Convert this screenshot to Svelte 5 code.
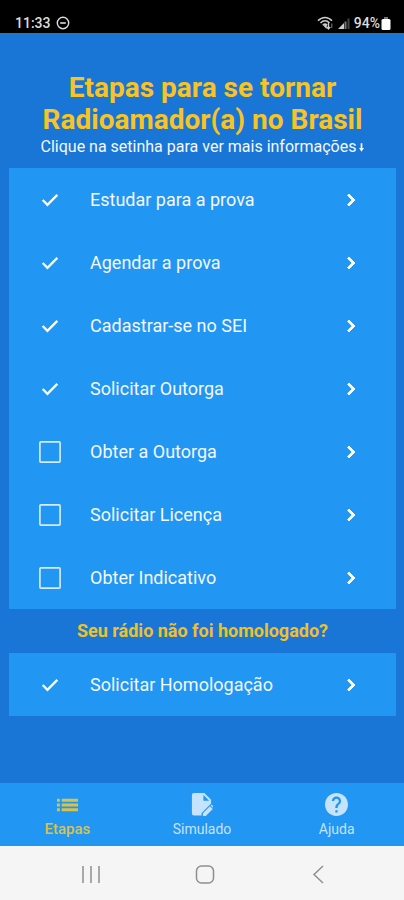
<script>
  let steps = $state([
    { id: 'estudar', label: 'Estudar para a prova', done: true },
    { id: 'agendar', label: 'Agendar a prova', done: true },
    { id: 'cadastrar', label: 'Cadastrar-se no SEI', done: true },
    { id: 'solicitar-outorga', label: 'Solicitar Outorga', done: true },
    { id: 'obter-outorga', label: 'Obter a Outorga', done: false },
    { id: 'licenca', label: 'Solicitar Licença', done: false },
    { id: 'indicativo', label: 'Obter Indicativo', done: false }
  ]);

  let extraSteps = $state([
    { id: 'homologacao', label: 'Solicitar Homologação', done: true }
  ]);

  let activeTab = $state('etapas');
</script>

{#snippet stepList(items)}
  <ul class="steps">
    {#each items as step (step.id)}
      <li class="step">
        <input type="checkbox" id={step.id} bind:checked={step.done} />
        <svg class="tick" viewBox="0 0 24 24" aria-hidden="true">
          {#if step.done}
            <path d="M4 12l5.200 5.200L20 6.400" fill="none" stroke="#fff" stroke-width="2.500" />
          {:else}
            <rect x="1" y="1" width="22" height="22" rx="1" fill="none" stroke="#d5ecff" stroke-width="1.800" />
          {/if}
        </svg>
        <label for={step.id} id="{step.id}-label">{step.label}</label>
        <button class="more" aria-labelledby="{step.id}-label">
          <svg viewBox="0 0 24 24" aria-hidden="true">
            <path d="M8.590 16.590L13.170 12 8.590 7.410 10 6l6 6-6 6z" fill="#fff" stroke="#fff" stroke-width="0.900" />
          </svg>
        </button>
      </li>
    {/each}
  </ul>
{/snippet}

<div class="screen">
  <div class="status">
    <span>11:33</span>
    <svg class="dnd" viewBox="0 0 14 14" aria-hidden="true">
      <circle cx="7" cy="7" r="5.700" fill="none" stroke="#ddd" stroke-width="1.400" />
      <path d="M4.200 7h5.600" stroke="#ddd" stroke-width="1.600" />
    </svg>
    <span class="spacer"></span>
    <svg class="wifi" viewBox="0 0 17 14" aria-hidden="true">
      <g fill="none" stroke="#ccc" stroke-width="1.500">
        <path d="M1 4.800C5 0.300 11 0.300 15 4.800" />
        <path d="M3.500 7C6.300 4 9.700 4 12.500 7" />
        <path d="M5.800 9.200c1.400-1.400 3-1.400 4.400 0" />
      </g>
      <path d="M6.200 9.500L10 8.500 9.500 13z" fill="#ccc" />
      <path d="M11.500 6.500v6M9.800 11l1.700 2 1.700-2" fill="none" stroke="#ccc" stroke-width="1.300" />
      <path d="M14.800 12V7.500" stroke="#777" stroke-width="1.100" />
    </svg>
    <svg class="signal" viewBox="0 0 12 12" aria-hidden="true">
      <path d="M0 12L6 6v6z" fill="#ccc" />
      <path d="M6.500 4.500h2V12h-2z" fill="#777" />
      <path d="M9.500 1.500h2V12h-2z" fill="#444" />
    </svg>
    <span>94%</span>
    <svg class="battery" viewBox="0 0 10 13" aria-hidden="true">
      <path d="M3 0h4v2H3z" fill="#777" />
      <rect x="0.500" y="2" width="9" height="11" rx="1.500" fill="#fff" />
    </svg>
  </div>

  <main>
    <h1>Etapas para se tornar Radioamador(a) no Brasil</h1>
    <p class="hint">
      Clique na setinha para ver mais informações
      <svg class="arrow" viewBox="0 0 6 10" aria-hidden="true">
        <path d="M2 0h2v5.500h2L3 10 0 5.500h2z" fill="#f4f8ff" />
      </svg>
    </p>
    {@render stepList(steps)}
    <h2>Seu rádio não foi homologado?</h2>
    {@render stepList(extraSteps)}
  </main>

  <nav class="tabs">
    <button class:active={activeTab === 'etapas'} onclick={() => (activeTab = 'etapas')}>
      <svg viewBox="0 0 24 24" aria-hidden="true">
        <path d="M1 6h3v3H1zM6 6h17v3H6zM1 11h3v3H1zM6 11h17v3H6zM1 16h3v3H1zM6 16h17v3H6z" fill="currentColor" />
      </svg>
      Etapas
    </button>
    <button class:active={activeTab === 'simulado'} onclick={() => (activeTab = 'simulado')}>
      <svg viewBox="-1 0 24 24" aria-hidden="true">
        <path d="M3 0h11l7 7v4L11 21v2.500H3a2 2 0 0 1-2-2V2a2 2 0 0 1 2-2zm10 2v6h6z" fill="currentColor" fill-rule="evenodd" />
        <path d="M12.500 24v-3l7.300-7.300 3 3L15.500 24zM20.500 13l1-1 3 3-1 1z" fill="currentColor" />
      </svg>
      Simulado
    </button>
    <button class:active={activeTab === 'ajuda'} onclick={() => (activeTab = 'ajuda')}>
      <svg viewBox="2 2 20 20" aria-hidden="true">
        <path d="M12 2C6.480 2 2 6.480 2 12s4.480 10 10 10 10-4.480 10-10S17.520 2 12 2zm1 17h-2v-2h2v2zm2.070-7.750l-.9.920C13.450 12.900 13 13.500 13 15h-2v-.5c0-1.100.45-2.100 1.170-2.830l1.240-1.260c.37-.36.590-.86.590-1.410 0-1.100-.9-2-2-2s-2 .9-2 2H8c0-2.210 1.790-4 4-4s4 1.790 4 4c0 .88-.36 1.680-.93 2.250z" fill="currentColor" />
      </svg>
      Ajuda
    </button>
  </nav>

  <div class="system">
    <button aria-label="Recentes">
      <svg viewBox="0 0 20 20"><path d="M2 2v17M10 2v17M18 2v17" /></svg>
    </button>
    <button aria-label="Início">
      <svg viewBox="0 0 20 20"><rect x="1.500" y="2" width="17" height="17" rx="5" /></svg>
    </button>
    <button aria-label="Voltar">
      <svg viewBox="0 0 20 20"><path d="M15 2L6 10.500l9 8.500" /></svg>
    </button>
  </div>
</div>

<style>
  :global(body) {
    background: #1976d6;
  }

  .screen {
    display: flex;
    flex-direction: column;
    min-height: 100vh;
    background: #1976d6;
    color: #f4f8ff;
    font-family: Roboto, "Liberation Sans", sans-serif;
  }

  button {
    margin: 0;
    padding: 0;
    border: 0;
    background: none;
    color: inherit;
    font: inherit;
    cursor: pointer;
  }

  svg {
    display: block;
    flex: none;
  }

  .status {
    display: flex;
    align-items: center;
    gap: 4px;
    padding: 14px 13px 1px 15px;
    background: #000;
    color: #ddd;
    font-size: 14px;
    font-weight: 500;
    line-height: 18px;
  }

  .spacer {
    flex: 1;
  }

  .dnd {
    width: 14px;
    height: 14px;
    margin-left: 1px;
  }

  .wifi {
    width: 17px;
    height: 14px;
  }

  .signal {
    width: 12px;
    height: 12px;
  }

  .battery {
    width: 10px;
    height: 13px;
    margin-left: -3px;
  }

  main {
    flex: 1;
    padding: 39px 8px 0 9px;
  }

  h1 {
    max-width: 350px;
    margin: 0 auto;
    color: #f7c325;
    font-size: 28px;
    font-weight: 700;
    line-height: 32px;
    text-align: center;
  }

  .hint {
    display: flex;
    align-items: center;
    justify-content: center;
    gap: 3px;
    margin: 0 0 10px;
    font-size: 16px;
    line-height: 22px;
  }

  .arrow {
    width: 5px;
    height: 9px;
  }

  h2 {
    margin: 0;
    color: #f0c02c;
    font-size: 18px;
    font-weight: 700;
    line-height: 44px;
    text-align: center;
  }

  .steps {
    margin: 0;
    padding: 0;
    background: #2196f3;
    list-style: none;
  }

  .step {
    position: relative;
    display: flex;
    align-items: center;
    height: 63px;
    padding: 0 33px 0 30px;
    font-size: 18px;
  }

  .step input {
    position: absolute;
    width: 22px;
    height: 22px;
    margin: 0;
    opacity: 0;
  }

  .tick {
    width: 22px;
    height: 22px;
  }

  .step label {
    flex: 1;
    margin-left: 29px;
  }

  .more svg {
    width: 24px;
    height: 24px;
  }

  .tabs {
    display: grid;
    grid-template-columns: repeat(3, 1fr);
    height: 63px;
    background: #2196f3;
    color: #c5e3fc;
    font-size: 14px;
    line-height: 18px;
  }

  .tabs button {
    display: flex;
    flex-direction: column;
    align-items: center;
    justify-content: center;
    gap: 4px;
    padding-top: 2px;
  }

  .tabs svg {
    width: 23px;
    height: 23px;
  }

  .tabs .active {
    color: #d9c24b;
    font-size: 15px;
    font-weight: 500;
  }

  .system {
    display: flex;
    justify-content: space-between;
    height: 54px;
    padding: 1px 76px 0 81px;
    box-sizing: border-box;
    background: #f5f5f5;
  }

  .system svg {
    width: 20px;
    height: 20px;
    fill: none;
    stroke: #8f8f8f;
    stroke-width: 1.5;
  }
</style>
